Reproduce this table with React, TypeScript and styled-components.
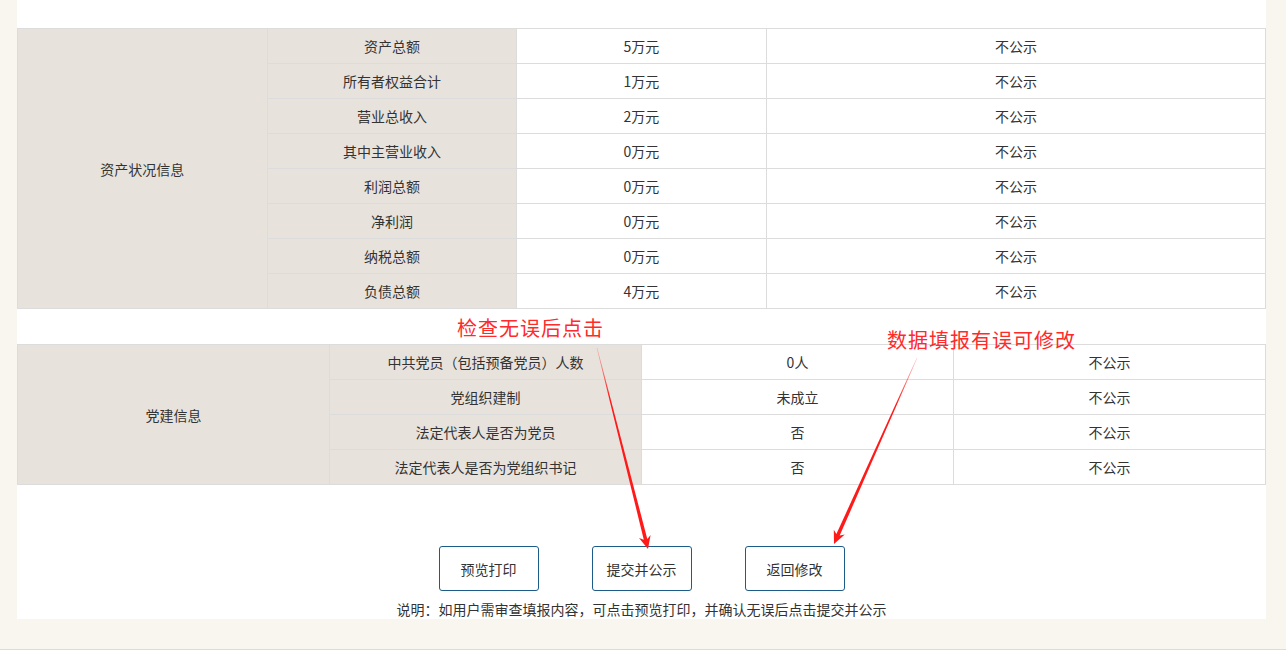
import React from "react";
import styled, { createGlobalStyle } from "styled-components";

const GlobalStyle = createGlobalStyle`
  html, body { margin: 0; padding: 0; }
  body {
    background: #f9f6ef;
    font-family: "Noto Sans CJK SC", "Noto Sans", "Liberation Sans", sans-serif;
    color: #333;
  }
  * { box-sizing: border-box; }
`;

const Page = styled.div`
  width: 1286px;
  height: 650px;
  padding-left: 17px;
  border-bottom: 1px solid #dcdcdc;
  background: #f9f6ef;
`;

const Panel = styled.div`
  position: relative;
  width: 1249px;
  height: 619px;
  background: #fff;
  padding-top: 28px;
  display: flex;
  flex-direction: column;
  align-items: stretch;
`;

const Table = styled.table<{ $gap?: number }>`
  width: 100%;
  border-collapse: collapse;
  table-layout: fixed;
  margin-top: ${(p) => p.$gap ?? 0}px;
  font-size: 14px;
`;

const Cell = styled.td<{ $label?: boolean }>`
  height: 35px;
  padding: 0;
  text-align: center;
  vertical-align: middle;
  border: 1px solid #dcdcdc;
  background: ${(p) => (p.$label ? "#e8e2dc" : "#fff")};
  color: #333;
  line-height: 20px;
`;

const ButtonRow = styled.div`
  display: flex;
  justify-content: center;
  gap: 53px;
  margin-top: 61px;
`;

const ActionButton = styled.button`
  width: 100px;
  height: 45px;
  background: #fff;
  border: 1px solid #1d5b88;
  border-radius: 3px;
  font-family: inherit;
  font-size: 14px;
  color: #333;
  padding: 0;
  cursor: pointer;
`;

const Note = styled.div`
  margin-top: 8px;
  text-align: center;
  font-size: 14px;
  line-height: 20px;
  color: #333;
`;

const Annotation = styled.div<{ $left: number; $top: number }>`
  position: absolute;
  left: ${(p) => p.$left}px;
  top: ${(p) => p.$top}px;
  font-size: 20px;
  line-height: 20px;
  letter-spacing: 1px;
  color: #ff2a2a;
  white-space: nowrap;
  pointer-events: none;
`;

const Overlay = styled.svg`
  position: absolute;
  left: 0;
  top: 0;
  width: 1249px;
  height: 619px;
  pointer-events: none;
`;

function arrowPoints(x1: number, y1: number, x2: number, y2: number) {
  const dx = x2 - x1;
  const dy = y2 - y1;
  const len = Math.sqrt(dx * dx + dy * dy);
  const ux = dx / len;
  const uy = dy / len;
  const nx = -uy;
  const ny = ux;
  const headLen = 13;
  const headW = 6;
  const bx = x2 - ux * headLen;
  const by = y2 - uy * headLen;
  const nb = 9; // notch back
  const cx = x2 - ux * (headLen - 3);
  const cy = y2 - uy * (headLen - 3);
  const p = (x: number, y: number) => `${x.toFixed(1)},${y.toFixed(1)}`;
  return [
    p(x1 + nx * 0.3, y1 + ny * 0.3),
    p(cx + nx * 1.8, cy + ny * 1.8),
    p(bx + nx * headW - ux * 0, by + ny * headW),
    p(x2, y2),
    p(bx - nx * headW, by - ny * headW),
    p(cx - nx * 1.8, cy - ny * 1.8),
    p(x1 - nx * 0.3, y1 - ny * 0.3),
  ].join(" ") + (nb ? "" : "");
}

const assetRows: [string, string][] = [
  ["资产总额", "5万元"],
  ["所有者权益合计", "1万元"],
  ["营业总收入", "2万元"],
  ["其中主营业收入", "0万元"],
  ["利润总额", "0万元"],
  ["净利润", "0万元"],
  ["纳税总额", "0万元"],
  ["负债总额", "4万元"],
];

const partyRows: [string, string][] = [
  ["中共党员（包括预备党员）人数", "0人"],
  ["党组织建制", "未成立"],
  ["法定代表人是否为党员", "否"],
  ["法定代表人是否为党组织书记", "否"],
];

export default function App() {
  return (
    <>
      <GlobalStyle />
      <Page>
        <Panel>
          <Table>
            <colgroup>
              <col style={{ width: "20%" }} />
              <col style={{ width: "20%" }} />
              <col style={{ width: "20%" }} />
              <col style={{ width: "40%" }} />
            </colgroup>
            <tbody>
              {assetRows.map(([k, v], i) => (
                <tr key={k}>
                  {i === 0 && (
                    <Cell $label rowSpan={assetRows.length}>
                      资产状况信息
                    </Cell>
                  )}
                  <Cell $label>{k}</Cell>
                  <Cell>{v}</Cell>
                  <Cell>不公示</Cell>
                </tr>
              ))}
            </tbody>
          </Table>
          <Table $gap={35}>
            <colgroup>
              <col style={{ width: "25%" }} />
              <col style={{ width: "25%" }} />
              <col style={{ width: "25%" }} />
              <col style={{ width: "25%" }} />
            </colgroup>
            <tbody>
              {partyRows.map(([k, v], i) => (
                <tr key={k}>
                  {i === 0 && (
                    <Cell $label rowSpan={partyRows.length}>
                      党建信息
                    </Cell>
                  )}
                  <Cell $label>{k}</Cell>
                  <Cell>{v}</Cell>
                  <Cell>不公示</Cell>
                </tr>
              ))}
            </tbody>
          </Table>
          <ButtonRow>
            <ActionButton>预览打印</ActionButton>
            <ActionButton>提交并公示</ActionButton>
            <ActionButton>返回修改</ActionButton>
          </ButtonRow>
          <Note>说明：如用户需审查填报内容，可点击预览打印，并确认无误后点击提交并公示</Note>

          <Annotation $left={440} $top={318}>检查无误后点击</Annotation>
          <Annotation $left={870} $top={330}>数据填报有误可修改</Annotation>
          <Overlay viewBox="0 0 1249 619">
            <defs>
              <linearGradient id="ga" x1="580" y1="348" x2="631" y2="549" gradientUnits="userSpaceOnUse">
                <stop offset="0" stopColor="#ff2a2a" stopOpacity="0.25" />
                <stop offset="0.25" stopColor="#ff1a1a" stopOpacity="1" />
                <stop offset="1" stopColor="#ff1a1a" stopOpacity="1" />
              </linearGradient>
              <linearGradient id="gb" x1="900" y1="358" x2="817" y2="544" gradientUnits="userSpaceOnUse">
                <stop offset="0" stopColor="#ff2a2a" stopOpacity="0.25" />
                <stop offset="0.25" stopColor="#ff1a1a" stopOpacity="1" />
                <stop offset="1" stopColor="#ff1a1a" stopOpacity="1" />
              </linearGradient>
            </defs>
            <polygon points={arrowPoints(580, 348, 631, 549)} fill="url(#ga)" />
            <polygon points={arrowPoints(900, 358, 817, 544)} fill="url(#gb)" />
          </Overlay>
        </Panel>
      </Page>
    </>
  );
}
